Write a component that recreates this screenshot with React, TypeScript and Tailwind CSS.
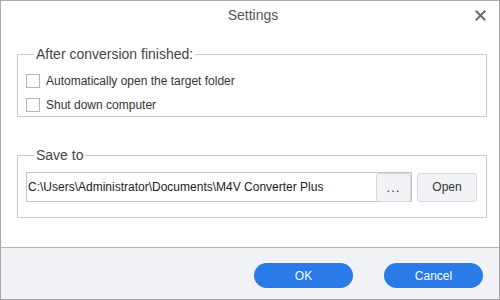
export default function App() {
  const font = { fontFamily: '"Liberation Sans", Arial, sans-serif' }
  return (
    <div className="w-[500px] h-[300px] bg-white border border-[#a9a9a9] flex flex-col text-[#333]" style={font}>
      {/* Title bar */}
      <div className="relative h-[28px] flex items-center justify-center pl-[6px]">
        <span className="text-[14px] text-[#555]">Settings</span>
        <button className="absolute right-[12px] top-[7px] w-[14px] h-[14px] flex items-center justify-center text-[#666]">
          <svg width="11" height="11" viewBox="0 0 11 11">
            <path d="M1.5 1.5 L9.5 9.5 M9.5 1.5 L1.5 9.5" stroke="#6b6b6b" strokeWidth="2" strokeLinecap="square" />
          </svg>
        </button>
      </div>

      <div className="flex-1 pl-[16px]">
        {/* After conversion */}
        <fieldset className="w-[470px] h-[71px] mt-[17px] border border-[#c9c9c9] pl-[8px] pt-[8px]">
          <legend className="ml-[8px] px-[2px] text-[14px] leading-[17px] text-[#444]">After conversion finished:</legend>
          <label className="flex items-center h-[20px] gap-[6px]">
            <span className="w-[14px] h-[14px] border border-[#b5b5b5] bg-white" />
            <span className="text-[12px]">Automatically open the target folder</span>
          </label>
          <label className="flex items-center h-[20px] mt-[4px] gap-[6px]">
            <span className="w-[14px] h-[14px] border border-[#b5b5b5] bg-white" />
            <span className="text-[12px]">Shut down computer</span>
          </label>
        </fieldset>

        {/* Save to */}
        <fieldset className="w-[470px] h-[71px] mt-[30px] border border-[#c9c9c9] pl-[8px] pt-[8px]">
          <legend className="ml-[8px] px-[2px] text-[14px] leading-[17px] text-[#444]">Save to</legend>
          <div className="flex items-center gap-[5px]">
            <div className="w-[386px] h-[30px] border border-[#c4c4c4] flex items-center">
              <span className="flex-1 pl-[1px] text-[12px] text-[#222] whitespace-nowrap overflow-hidden">
                C:\Users\Administrator\Documents\M4V Converter Plus
              </span>
              <button className="w-[35px] h-[29px] bg-[#f1f3f6] border border-[#d3d6db] rounded-[3px] text-[13px] tracking-[1px] text-[#333] leading-none">
                ...
              </button>
            </div>
            <button className="w-[60px] h-[29px] bg-[#f1f3f6] border border-[#d6d9de] rounded-[3px] text-[12px] text-[#333]">
              Open
            </button>
          </div>
        </fieldset>
      </div>

      {/* Footer */}
      <div className="h-[52px] border-t border-[#b4b4b4] bg-[#f0f2f5] flex items-start justify-end gap-[31px] pt-[15px] pr-[16px]">
        <button className="w-[99px] h-[25px] rounded-full bg-[#2a7be8] text-white text-[12px]">OK</button>
        <button className="w-[99px] h-[25px] rounded-full bg-[#2a7be8] text-white text-[12px]">Cancel</button>
      </div>
    </div>
  )
}
